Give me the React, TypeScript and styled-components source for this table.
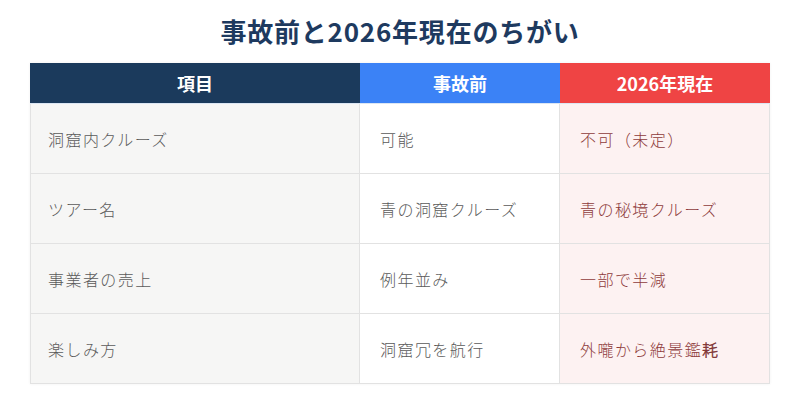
import React from "react";
import styled, { createGlobalStyle } from "styled-components";

const Global = createGlobalStyle`
  html, body { margin: 0; padding: 0; background: #ffffff; }
  body { font-family: "Noto Sans CJK JP", "Noto Sans", sans-serif; }
`;

const Page = styled.div`
  width: 800px;
  height: 420px;
  box-sizing: border-box;
  padding: 14px 30px 0;
  display: flex;
  flex-direction: column;
  align-items: stretch;
`;

const Title = styled.h1`
  margin: 0 0 15px;
  text-align: center;
  font-size: 26px;
  line-height: 34px;
  font-weight: 700;
  color: #1e3a5f;
  letter-spacing: 0.03em;
`;

const Table = styled.div`
  display: grid;
  grid-template-columns: 330px 200px 210px;
  width: 740px;
  box-shadow: 0 0 3px rgba(0, 0, 0, 0.06);
`;

const Head = styled.div<{ $bg: string }>`
  height: 40px;
  display: flex;
  align-items: center;
  justify-content: center;
  background: ${(p) => p.$bg};
  color: #ffffff;
  font-size: 18px;
  font-weight: 700;
  border-bottom: 1px solid #dbe6f3;
`;

const Cell = styled.div<{ $kind: "label" | "before" | "now" }>`
  height: 70px;
  box-sizing: border-box;
  display: flex;
  align-items: center;
  padding-left: ${(p) => (p.$kind === "label" ? "17px" : "20px")};
  font-size: 16px;
  letter-spacing: 0.09em;
  font-weight: 300;
  background: ${(p) =>
    p.$kind === "label" ? "#f6f6f5" : p.$kind === "now" ? "#fdf2f2" : "#ffffff"};
  color: ${(p) => (p.$kind === "now" ? "#8e3b3b" : "#5a5a5a")};
  border-bottom: 1px solid #e2e2e2;
  border-right: 1px solid #e2e2e2;
  ${(p) => (p.$kind === "label" ? "border-left: 1px solid #e2e2e2;" : "")}
`;

const Heavy = styled.span`
  -webkit-text-stroke: 0.45px #7f3434;
  color: #7f3434;
`;

const rows: [string, string, React.ReactNode][] = [
  ["洞窟内クルーズ", "可能", "不可（未定）"],
  ["ツアー名", "青の洞窟クルーズ", "青の秘境クルーズ"],
  ["事業者の売上", "例年並み", "一部で半減"],
  [
    "楽しみ方",
    "洞窟冗を航行",
    <>
      外嚨から絶景鑑<Heavy>耗</Heavy>
    </>,
  ],
];

export default function App() {
  return (
    <>
      <Global />
      <Page>
        <Title>事故前と2026年現在のちがい</Title>
        <Table>
          <Head $bg="#1b3a5c">項目</Head>
          <Head $bg="#3b82f6">事故前</Head>
          <Head $bg="#ef4444">2026年現在</Head>
          {rows.map((r) => (
            <React.Fragment key={r[0]}>
              <Cell $kind="label">{r[0]}</Cell>
              <Cell $kind="before">{r[1]}</Cell>
              <Cell $kind="now">{r[2]}</Cell>
            </React.Fragment>
          ))}
        </Table>
      </Page>
    </>
  );
}
